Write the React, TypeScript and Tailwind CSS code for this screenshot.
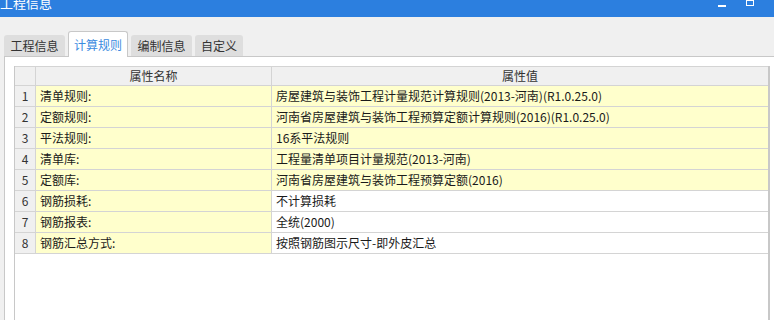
import React from "react";

const rows: { n: number; name: string; value: string; valueYellow: boolean }[] = [
  { n: 1, name: "清单规则:", value: "房屋建筑与装饰工程计量规范计算规则(2013-河南)(R1.0.25.0)", valueYellow: true },
  { n: 2, name: "定额规则:", value: "河南省房屋建筑与装饰工程预算定额计算规则(2016)(R1.0.25.0)", valueYellow: true },
  { n: 3, name: "平法规则:", value: "16系平法规则", valueYellow: true },
  { n: 4, name: "清单库:", value: "工程量清单项目计量规范(2013-河南)", valueYellow: true },
  { n: 5, name: "定额库:", value: "河南省房屋建筑与装饰工程预算定额(2016)", valueYellow: true },
  { n: 6, name: "钢筋损耗:", value: "不计算损耗", valueYellow: false },
  { n: 7, name: "钢筋报表:", value: "全统(2000)", valueYellow: false },
  { n: 8, name: "钢筋汇总方式:", value: "按照钢筋图示尺寸-即外皮汇总", valueYellow: false },
];

export default function App() {
  return (
    <div
      className="w-[774px] h-[320px] overflow-hidden bg-[#f0f0f0] flex flex-col text-[12px] text-[#1a1a1a]"
      style={{ fontFamily: '"Noto Sans CJK SC", "Noto Sans", sans-serif' }}
    >
      {/* Title bar */}
      <div className="h-[17px] shrink-0 bg-[#2c7fdf] flex items-start relative overflow-hidden">
        <span className="text-white text-[13px] leading-[13px] -mt-[4px] ml-0">工程信息</span>
        <div className="absolute left-[718px] top-[5px] w-[8px] h-[2px] bg-white" />
        <div className="absolute left-[746px] top-[-1px] w-[8px] h-[7px] border border-white border-t-[2px]" />
      </div>

      {/* Tabs */}
      <div className="h-[39px] shrink-0 flex items-end pl-[4px] gap-[3px]">
        <div className="h-[21px] w-[61px] bg-[#dedede] rounded-t-[3px] flex items-center justify-center text-[#333] mb-[0px]">
          工程信息
        </div>
        <div className="h-[26px] w-[60px] bg-white border border-b-0 border-[#c8c8c8] rounded-t-[3px] flex items-center justify-center text-[#3b8be0] relative z-10 -mb-[1px]">
          计算规则
        </div>
        <div className="h-[21px] w-[61px] bg-[#dedede] rounded-t-[3px] flex items-center justify-center text-[#333]">
          编制信息
        </div>
        <div className="h-[21px] w-[48px] bg-[#dedede] rounded-t-[3px] flex items-center justify-center text-[#333]">
          自定义
        </div>
      </div>

      {/* Panel */}
      <div className="flex-1 ml-[4px] border-l border-t border-[#c8c8c8] bg-white pl-[9px] pt-[9px] flex">
        <div className="w-[756px] border-l border-r-[2px] border-[#c8c8c8] flex flex-col">
          {/* Header */}
          <div className="flex h-[20px] bg-[#f0f0f0] border-t border-b border-[#d4d4d4] text-[#333]">
            <div className="w-[21px] border-r border-[#d4d4d4]" />
            <div className="w-[236px] border-r border-[#d4d4d4] flex items-center justify-center">属性名称</div>
            <div className="flex-1 flex items-center justify-center">属性值</div>
          </div>
          {rows.map((r) => (
            <div key={r.n} className="flex h-[21px] border-b border-[#d4d4d4]">
              <div className="w-[21px] bg-[#f0f0f0] border-r border-[#d4d4d4] flex items-center justify-center text-[#333]">
                {r.n}
              </div>
              <div className="w-[236px] bg-[#ffffcc] border-r border-[#d4d4d4] flex items-center pl-[4px] whitespace-nowrap">
                {r.name}
              </div>
              <div
                className={
                  "flex-1 flex items-center pl-[4px] whitespace-nowrap " +
                  (r.valueYellow ? "bg-[#ffffcc]" : "bg-white")
                }
              >
                {r.value}
              </div>
            </div>
          ))}
        </div>
      </div>
    </div>
  );
}
